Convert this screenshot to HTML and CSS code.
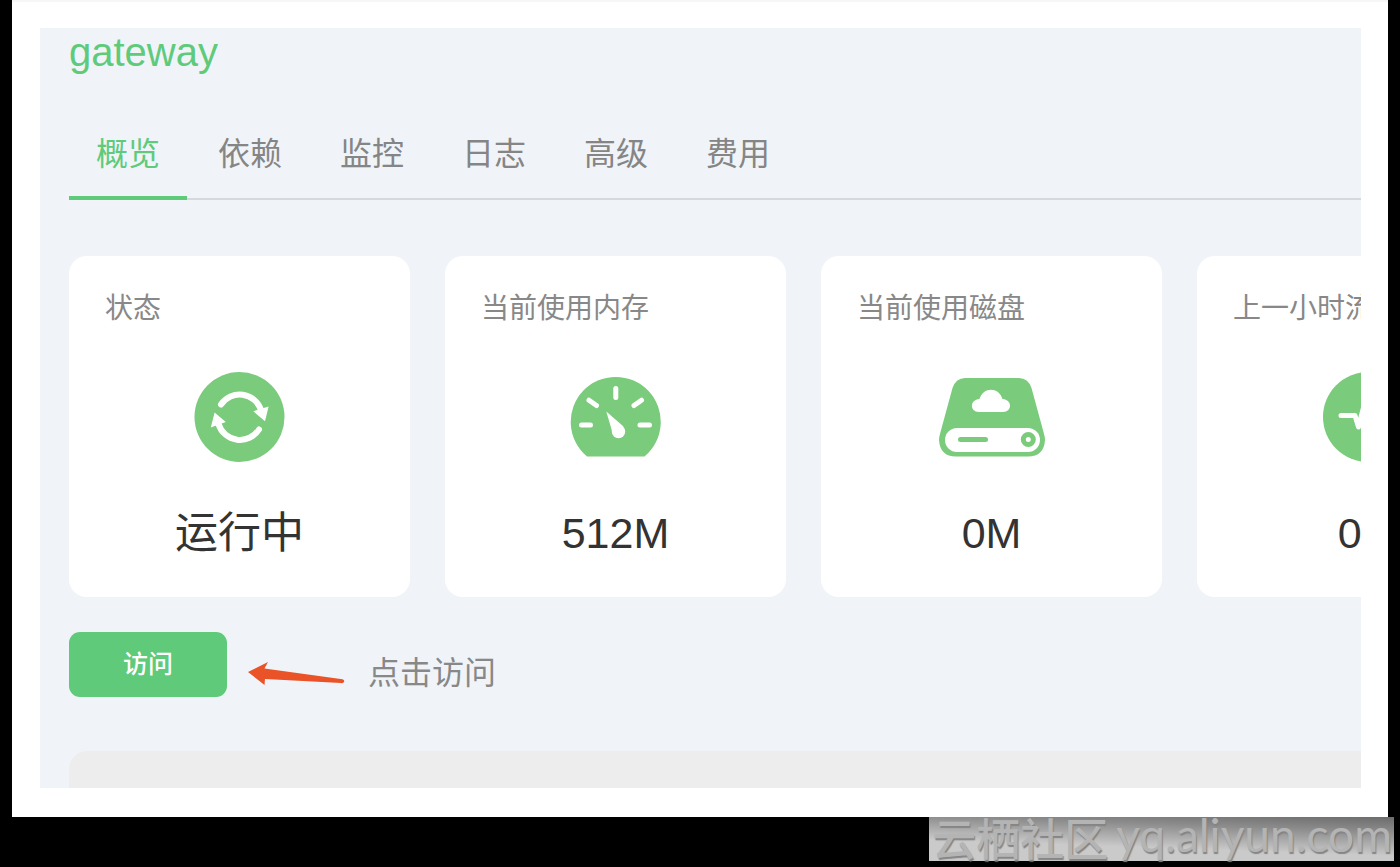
FILE: index.html
```html
<!DOCTYPE html>
<html lang="zh-CN">
<head>
<meta charset="utf-8">
<title>gateway</title>
<link rel="stylesheet" href="styles.css">
</head>
<body>
<div class="frame">
  <main class="panel">
    <h1 class="title">gateway</h1>
    <nav class="tabs">
      <a class="tab tab-active" href="#overview">概览</a>
      <a class="tab" href="#deps">依赖</a>
      <a class="tab" href="#monitor">监控</a>
      <a class="tab" href="#logs">日志</a>
      <a class="tab" href="#advanced">高级</a>
      <a class="tab" href="#cost">费用</a>
    </nav>
    <section class="cards">
      <article class="card">
        <h2 class="card-label">状态</h2>
        <svg class="card-icon" viewBox="0 0 120 110" aria-hidden="true">
          <circle class="fill" cx="59.5" cy="57" r="45"/>
          <path class="stroke thick" d="M41 44.500A22.500 22.500 0 0 1 81 50"/>
          <path class="stroke thick" d="M79 69.500A22.500 22.500 0 0 1 38.500 64"/>
          <path class="cut" d="M73.300 51.300L88.600 46.600L85 61.200ZM45.800 62L30.800 67.500L34.600 52.500Z"/>
        </svg>
        <p class="card-value">运行中</p>
      </article>
      <article class="card">
        <h2 class="card-label">当前使用内存</h2>
        <svg class="card-icon" viewBox="1 0 120 110" aria-hidden="true">
          <path class="fill" d="M32 96.500A45 45 0 1 1 89.500 96.500Z"/>
          <path class="stroke" d="M60.800 28.500V37.500M34 40.200L41.500 45.500M86.500 40.200L79 45.500M26.500 65H35.500M85 65H94.500"/>
          <path class="cut" d="M51.300 51.500L68.500 66.500L58 74.500Z"/>
          <circle class="cut" cx="63.500" cy="71.500" r="6.700"/>
        </svg>
        <p class="card-value">512M</p>
      </article>
      <article class="card">
        <h2 class="card-label">当前使用磁盘</h2>
        <svg class="card-icon" viewBox="2 0 120 110" aria-hidden="true">
          <path class="fill" d="M35 18H89Q98 18 101.500 28L113.500 72Q115 77 115 80Q114 96.500 98 96.500H26Q10 96.500 9 80Q9 77 10.500 72L22.500 28Q26 18 35 18Z"/>
          <rect class="cut" x="15" y="68" width="95" height="24" rx="12"/>
          <path class="cut" d="M49 52C39.500 52 39.500 39.500 49.500 39C53 26.500 69 26.500 72.500 39C82.500 39.500 82.500 52 73 52Z"/>
          <path class="line" d="M30.500 79.500H55.500"/>
          <circle class="line" cx="98.300" cy="79.500" r="5"/>
        </svg>
        <p class="card-value">0M</p>
      </article>
      <article class="card">
        <h2 class="card-label">上一小时流量</h2>
        <svg class="card-icon" viewBox="0 0 120 110" aria-hidden="true">
          <circle class="fill" cx="60" cy="57" r="45"/>
          <path class="stroke" d="M33 55.500H47L50.500 67L58 38L68 76L74 55.500H87"/>
        </svg>
        <p class="card-value">0M</p>
      </article>
    </section>
    <div class="actions">
      <button class="visit" type="button">访问</button>
      <div class="hint">
        <svg class="arrow" viewBox="0 0 98 24" aria-hidden="true">
          <path d="M0 11L20 1L16.500 7.500L94.500 18.200Q97 19.200 96 21Q95 22.500 93 22L17 18L16.500 24Z"/>
        </svg>
        <span>点击访问</span>
      </div>
    </div>
    <div class="block"></div>
  </main>
</div>
<footer class="footer">
  <div class="watermark"><span class="mark-cn">云栖社区</span><span>yq.aliyun.com</span></div>
</footer>
</body>
</html>
```
FILE: styles.css
```css
* {
  box-sizing: border-box;
}

body {
  margin: 0;
  height: 100vh;
  display: flex;
  flex-direction: column;
  background: #000;
  font-family: "Liberation Sans", "Noto Sans CJK SC", sans-serif;
  color: #888;
}

.frame {
  flex: 1;
  min-height: 0;
  display: flex;
  margin: 0 12px;
  padding: 26px 27px 29px 28px;
  background: #fff;
  border-top: 2px solid #f6f6f6;
}

.panel {
  flex: 1;
  min-width: 0;
  overflow: hidden;
  padding-left: 29px;
  background: #f0f4f8;
}

.title {
  margin: 0;
  font-size: 40px;
  line-height: 48px;
  font-weight: 400;
  color: #5fca7a;
}

.tabs {
  display: flex;
  gap: 4px;
  margin-top: 28px;
  height: 96px;
  box-shadow: inset 0 -2px #d5d9dc;
}

.tab {
  padding: 26px 27px 0;
  border-bottom: 4px solid transparent;
  font-size: 32px;
  line-height: 48px;
  color: #858585;
  text-decoration: none;
}

.tab-active {
  color: #5fca7a;
  border-color: #5fca7a;
}

.cards {
  display: flex;
  gap: 35px;
  margin-top: 56px;
}

.card {
  flex: none;
  width: 341px;
  padding: 33px 36px 32px;
  display: flex;
  flex-direction: column;
  background: #fff;
  border-radius: 18px;
}

.card-label {
  margin: 0;
  font-size: 28px;
  line-height: 40px;
  font-weight: 400;
  white-space: nowrap;
}

.card-icon {
  align-self: center;
  width: 120px;
  height: 110px;
  margin-top: 31px;
}

.fill {
  fill: #7acb7b;
}

.cut {
  fill: #fff;
}

.stroke {
  fill: none;
  stroke: #fff;
  stroke-width: 5;
  stroke-linecap: round;
  stroke-linejoin: round;
}

.thick {
  stroke-width: 6;
}

.line {
  fill: none;
  stroke: #7acb7b;
  stroke-width: 5;
  stroke-linecap: round;
}

.card-value {
  margin: 31px 0 0;
  font-size: 43px;
  line-height: 64px;
  text-align: center;
  color: #333;
}

.actions {
  display: flex;
  align-items: flex-start;
  gap: 21px;
  margin-top: 35px;
}

.visit {
  width: 158px;
  height: 65px;
  padding: 0 0 6px;
  border: 0;
  border-radius: 11px;
  background: #5fca7a;
  color: #fff;
  font: 500 25px "Noto Sans CJK SC", sans-serif;
}

.hint {
  display: flex;
  align-items: center;
  gap: 22px;
  margin-top: 17px;
  font-size: 32px;
  line-height: 48px;
}

.arrow {
  width: 98px;
  height: 24px;
  fill: #ea5328;
}

.block {
  height: 120px;
  margin-top: 54px;
  background: #ededed;
  border-top-left-radius: 18px;
}

.footer {
  display: flex;
  justify-content: flex-end;
  padding: 0 6px 6px;
}

.watermark {
  display: flex;
  align-items: flex-start;
  gap: 8px;
  height: 44px;
  padding: 0 2px 0 3px;
  background: linear-gradient(2deg, #cacaca 35%, #8c8c8c 75%, #6c6c6c);
  font-family: Lato, sans-serif;
  font-size: 46px;
  line-height: 36px;
  color: #b4b4b4;
  text-shadow: 1px 2px 1px #858585;
}

.mark-cn {
  font-family: "Noto Sans CJK SC", sans-serif;
  font-weight: 500;
  font-size: 44px;
  line-height: 40px;
}
```
